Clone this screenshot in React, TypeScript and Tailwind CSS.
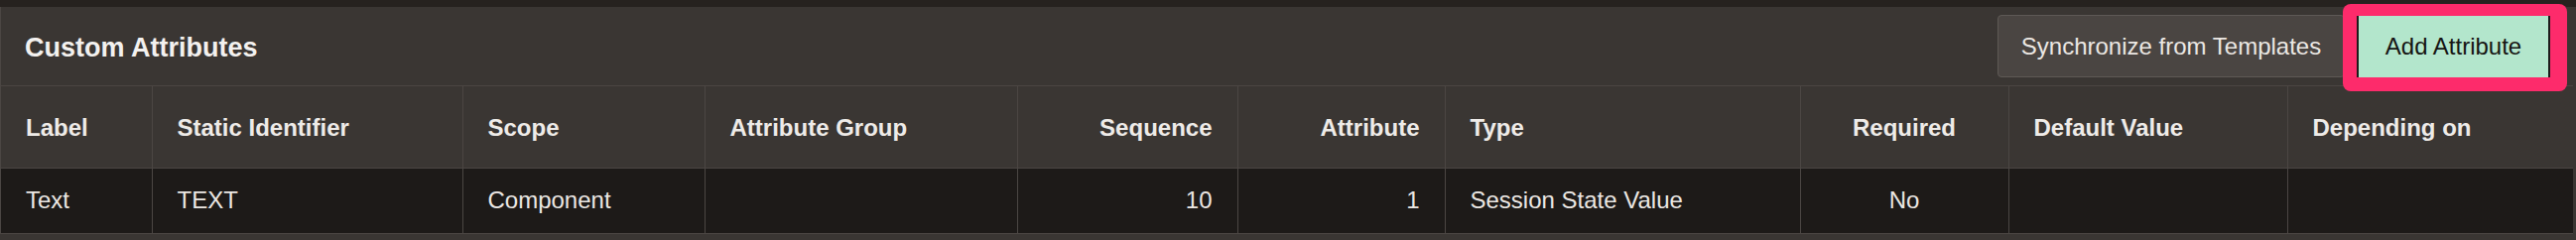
import React from "react";

type Column = {
  label: string;
  width: number;
  align: "left" | "right" | "center";
};

const columns: Column[] = [
  { label: "Label", width: 153, align: "left" },
  { label: "Static Identifier", width: 313, align: "left" },
  { label: "Scope", width: 244, align: "left" },
  { label: "Attribute Group", width: 315, align: "left" },
  { label: "Sequence", width: 222, align: "right" },
  { label: "Attribute", width: 209, align: "right" },
  { label: "Type", width: 358, align: "left" },
  { label: "Required", width: 210, align: "center" },
  { label: "Default Value", width: 281, align: "left" },
  { label: "Depending on", width: 288, align: "left" },
];

const rows: string[][] = [
  ["Text", "TEXT", "Component", "", "10", "1", "Session State Value", "No", "", ""],
];

const alignClass = (align: Column["align"]) =>
  align === "right" ? "text-right" : align === "center" ? "text-center" : "text-left";

const App = () => {
  return (
    <div
      className="w-full h-[242px] bg-[#3a3633] overflow-hidden"
      style={{ fontFamily: '"Liberation Sans", Arial, sans-serif' }}
    >
      <div className="h-[7px] bg-[#26221f]" />
      <section className="w-[2593px] border-l border-[#4b4643]">
        <header className="h-[80px] flex items-center justify-between pl-[24px] pr-[23px] border-b border-[#4b4643] bg-[#3a3633]">
          <h1 className="pt-[3px] text-[27px] font-bold text-[#f3f1ef]">Custom Attributes</h1>
          <div className="flex items-center gap-[12px]">
            <button className="h-[63px] w-[350px] rounded-[4px] border border-[#5e5955] bg-[#4a4542] text-[24px] text-[#ebe7e3]">
              Synchronize from Templates
            </button>
            <div className="relative">
              <span className="absolute top-[-12px] left-[-14px] right-[-17px] bottom-[-14px] rounded-[8px] bg-[#fd2b6b]" />
              <button className="relative h-[62px] w-[195px] border-x-2 border-[#1c1b1a] bg-[#b3e6cc] text-[24px] text-[#161513]">
                Add Attribute
              </button>
            </div>
          </div>
        </header>
        <table className="table-fixed border-collapse w-[2592px]">
          <colgroup>
            {columns.map((c, i) => (
              <col key={c.label} style={{ width: i === 0 ? c.width - 1 : c.width }} />
            ))}
          </colgroup>
          <thead>
            <tr className="h-[82px] bg-[#3a3633]">
              {columns.map((c, i) => (
                <th
                  key={c.label}
                  className={[
                    "px-[25px] pt-[3px] text-[24px] font-bold text-[#eeebe8] border-b border-[#4b4643]",
                    i > 0 ? "border-l" : "",
                    alignClass(c.align),
                  ].join(" ")}
                >
                  {c.label}
                </th>
              ))}
            </tr>
          </thead>
          <tbody>
            {rows.map((row, r) => (
              <tr key={r} className="h-[66px] bg-[#1d1a18]">
                {row.map((cell, i) => (
                  <td
                    key={i}
                    className={[
                      "px-[25px] text-[24px] text-[#ebe7e3] border-b border-[#4b4643]",
                      i > 0 ? "border-l" : "",
                      alignClass(columns[i].align),
                    ].join(" ")}
                  >
                    {cell}
                  </td>
                ))}
              </tr>
            ))}
          </tbody>
        </table>
      </section>
    </div>
  );
};

export default App;
